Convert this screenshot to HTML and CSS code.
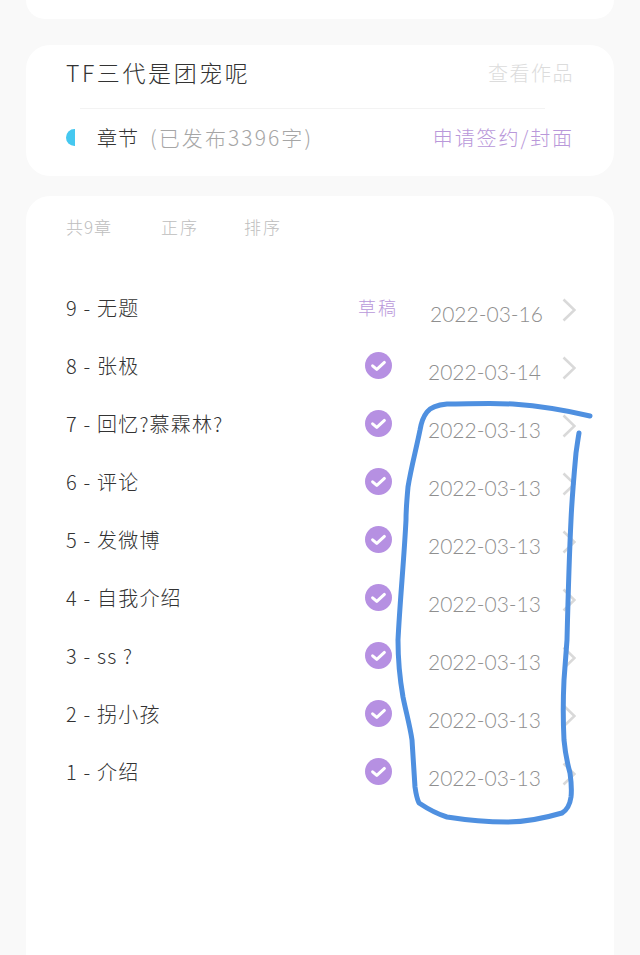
FILE: index.html
```html
<!DOCTYPE html>
<html lang="zh-CN">
<head>
  <meta charset="UTF-8">
  <title>章节管理</title>
  <link rel="stylesheet" href="styles.css">
</head>
<body>

  <svg class="sprites" width="0" height="0">
    <symbol id="check" viewBox="0 0 27 27">
      <circle cx="13.5" cy="13.5" r="13.5" fill="#b690e2"/>
      <path d="M7.6 13.8l4.2 3.6 7.6-7" fill="none" stroke="#fff" stroke-width="3" stroke-linecap="round" stroke-linejoin="round"/>
    </symbol>
    <symbol id="arrow" viewBox="0 0 14 24">
      <path d="M1.5 1.5L12.5 12 1.5 22.5" fill="none" stroke="#d9d9d9" stroke-width="2.6"/>
    </symbol>
  </svg>

  <div class="card card-stub"></div>

  <!-- 作品信息 -->
  <div class="card card-info">
    <div class="info-top">
      <span class="book-name">TF三代是团宠呢</span>
      <span class="book-link">查看作品</span>
    </div>
    <div class="info-line"></div>
    <div class="info-bottom">
      <span class="half-dot"></span>
      <span class="chapter-label">章节</span>
      <span class="chapter-count">(已发布3396字)</span>
      <span class="sign-link">申请签约/封面</span>
    </div>
  </div>

  <!-- 章节列表 -->
  <div class="card card-list">
    <div class="list-head">
      <span class="head-total">共9章</span>
      <span class="head-order">正序</span>
      <span class="head-sort">排序</span>
    </div>

    <div class="row">
      <span class="row-title">9 - 无题</span>
      <span class="row-status draft">草稿</span>
      <span class="row-date date-late">2022-03-16</span>
      <svg class="row-arrow"><use href="#arrow"/></svg>
    </div>
    <div class="row">
      <span class="row-title">8 - 张极</span>
      <span class="row-status"><svg class="check"><use href="#check"/></svg></span>
      <span class="row-date">2022-03-14</span>
      <svg class="row-arrow"><use href="#arrow"/></svg>
    </div>
    <div class="row">
      <span class="row-title">7 - 回忆?慕霖林?</span>
      <span class="row-status"><svg class="check"><use href="#check"/></svg></span>
      <span class="row-date">2022-03-13</span>
      <svg class="row-arrow"><use href="#arrow"/></svg>
    </div>
    <div class="row">
      <span class="row-title">6 - 评论</span>
      <span class="row-status"><svg class="check"><use href="#check"/></svg></span>
      <span class="row-date">2022-03-13</span>
      <svg class="row-arrow"><use href="#arrow"/></svg>
    </div>
    <div class="row">
      <span class="row-title">5 - 发微博</span>
      <span class="row-status"><svg class="check"><use href="#check"/></svg></span>
      <span class="row-date">2022-03-13</span>
      <svg class="row-arrow"><use href="#arrow"/></svg>
    </div>
    <div class="row">
      <span class="row-title">4 - 自我介绍</span>
      <span class="row-status"><svg class="check"><use href="#check"/></svg></span>
      <span class="row-date">2022-03-13</span>
      <svg class="row-arrow"><use href="#arrow"/></svg>
    </div>
    <div class="row">
      <span class="row-title">3 - ss ?</span>
      <span class="row-status"><svg class="check"><use href="#check"/></svg></span>
      <span class="row-date">2022-03-13</span>
      <svg class="row-arrow"><use href="#arrow"/></svg>
    </div>
    <div class="row">
      <span class="row-title">2 - 拐小孩</span>
      <span class="row-status"><svg class="check"><use href="#check"/></svg></span>
      <span class="row-date">2022-03-13</span>
      <svg class="row-arrow"><use href="#arrow"/></svg>
    </div>
    <div class="row">
      <span class="row-title">1 - 介绍</span>
      <span class="row-status"><svg class="check"><use href="#check"/></svg></span>
      <span class="row-date">2022-03-13</span>
      <svg class="row-arrow"><use href="#arrow"/></svg>
    </div>
  </div>

  <!-- 手绘的蓝色圈 -->
  <svg class="scribble" width="640" height="955" viewBox="0 0 640 955">
    <path d="M590 416C565 410 540 406 513 404C490 403 468 404 447 404C436 405 430 408 427 412C423 417 421 424 420 430C416 450 411 468 408 487C407 498 406 510 406 520C404 560 400 600 398 640C398 660 400 680 403 697C406 712 410 726 412 740C413 756 414 772 415 787C416 794 417 799 419 803C428 809 437 814 447 817C466 820 487 822 507 822C527 822 545 818 562 813C567 810 570 804 571 797C572 788 571 780 570 773C567 762 565 751 564 740C563 720 563 700 564 680C565 666 566 653 567 640C568 600 569 560 571 520C572 497 574 475 576 453C577 446 578 439 579 433" fill="none" stroke="#4f90e0" stroke-width="5" stroke-linecap="round" stroke-linejoin="round"/>
  </svg>

</body>
</html>
```

FILE: styles.css
```css
body {
  margin: 0;
  height: 955px;
  overflow: hidden;
  position: relative;
  background-color: #f9f9f9;
  font-family: "Noto Sans CJK SC", "Noto Sans", sans-serif;
  font-weight: 300;
  color: #333333;
}

.sprites {
  display: block;
  height: 0;
}

.card {
  margin: 0 26px;
  background-color: #ffffff;
  border-radius: 24px;
}

.card-stub {
  height: 19px;
  border-radius: 0 0 24px 24px;
}

/* 作品信息 */
.card-info {
  margin-top: 26px;
  height: 131px;
  padding: 11px 40px 0;
  box-sizing: border-box;
}

.info-top {
  display: flex;
  justify-content: space-between;
  align-items: center;
  height: 32px;
}

.book-name {
  font-size: 23px;
  letter-spacing: 2.6px;
}

.book-link {
  font-size: 20px;
  letter-spacing: 1.5px;
  color: #dcdcdc;
}

.info-line {
  height: 1px;
  margin: 20px 29px 0 14px;
  background-color: #f3f3f3;
}

.info-bottom {
  display: flex;
  align-items: center;
  height: 32px;
  margin-top: 12px;
}

.half-dot {
  width: 9px;
  height: 17px;
  background-color: #45c8f0;
  border-radius: 9px 0 0 9px;
}

.chapter-label {
  margin-left: 22px;
  font-size: 20px;
  letter-spacing: 1px;
}

.chapter-count {
  margin-left: 11px;
  font-size: 21px;
  letter-spacing: 2.1px;
  color: #a6a6a6;
}

.sign-link {
  margin-left: auto;
  font-size: 20px;
  letter-spacing: 1.9px;
  color: #b998da;
}

/* 章节列表 */
.card-list {
  margin-top: 20px;
  height: 800px;
  padding: 19px 38px 0 40px;
  box-sizing: border-box;
}

.list-head {
  display: flex;
  align-items: center;
  height: 22px;
  font-size: 17px;
  color: #bdbdbd;
}

.head-total {
  width: 95px;
  letter-spacing: 1px;
}

.head-order {
  width: 83px;
  letter-spacing: 2px;
}

.head-sort {
  letter-spacing: 2px;
}

.list-head + .row {
  margin-top: 41px;
}

.row {
  display: grid;
  grid-template-columns: 1fr 54px 157px 14px;
  align-items: center;
  height: 58px;
}

.row-title {
  font-size: 20px;
  letter-spacing: 1.2px;
  color: #333333;
}

.row-status {
  display: flex;
  justify-content: center;
}

.draft {
  font-size: 18px;
  letter-spacing: 2px;
  color: #b998da;
  white-space: nowrap;
}

.check {
  display: block;
  width: 27px;
  height: 27px;
  margin-top: 1px;
}

.row-date {
  margin-left: 23px;
  padding-top: 12px;
  font-family: "Lato", "Noto Sans", sans-serif;
  font-size: 21px;
  font-weight: 300;
  color: #8f8f8f;
  white-space: nowrap;
}

.date-late {
  margin-left: 25px;
}

.row-arrow {
  display: block;
  width: 14px;
  height: 24px;
  margin-top: 6px;
}

.scribble {
  position: absolute;
  top: 0;
  left: 0;
  pointer-events: none;
}
```
